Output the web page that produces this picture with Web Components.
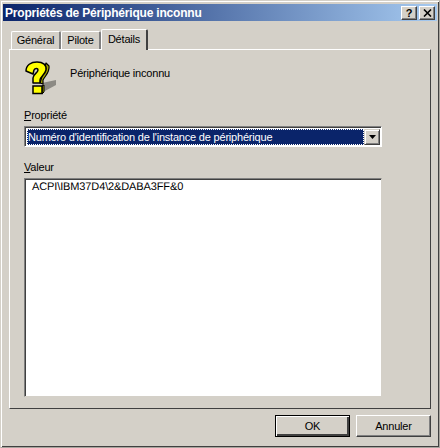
<!DOCTYPE html>
<html lang="fr">
<head>
<meta charset="utf-8">
<title>Propriétés de Périphérique inconnu</title>
<style>
    body {
        margin: 0;
        background: #d4d0c8;
        font: 11px "Liberation Sans", Arial, sans-serif;
        letter-spacing: -0.2px;
        color: #000;
    }
</style>
</head>
<body>

<template id="x-dialog-template">
    <style>
        *, *::before, *::after { box-sizing: border-box; }
        :host {
            display: flex;
            flex-flow: column;
            box-sizing: border-box;
            width: 440px;
            height: 448px;
            overflow: hidden;
            background: #d4d0c8;
            border-style: solid;
            border-width: 1px;
            border-color: #d4d0c8 #a8a59e #a8a59e #d4d0c8;
            box-shadow: inset 1px 1px 0 #fff, inset -1px -1px 0 #404040;
        }
        .inner {
            flex: 1;
            display: flex;
            flex-flow: column;
            padding: 3px 2px 0 2px;
        }
        .title {
            height: 17px;
            flex: none;
            display: flex;
            align-items: center;
            justify-content: space-between;
            padding: 0 2px 0 2px;
            background: linear-gradient(90deg, #0a246a, #a6caf0);
            color: #fff;
            font-weight: bold;
            font-size: 12px;
        }
        .caption { display: flex; gap: 2px; }
        .body { flex: 1; display: flex; flex-flow: column; padding: 8px 6px 0 6px; }
        .tabs { display: flex; align-items: flex-end; height: 20px; padding-left: 2px; position: relative; z-index: 1; }
        .page {
            height: 360px;
            border-style: solid;
            border-width: 1px;
            border-color: #fff #404040 #404040 #fff;
        }
        .footer { display: flex; justify-content: flex-end; gap: 6px; padding-top: 6px; }
    </style>
    <div class="inner">
        <div class="title">
            <slot name="title"></slot>
            <div class="caption"><slot name="caption"></slot></div>
        </div>
        <div class="body">
            <div class="tabs"><slot name="tabs"></slot></div>
            <div class="page"><slot></slot></div>
            <div class="footer"><slot name="footer"></slot></div>
        </div>
    </div>
</template>

<template id="x-caption-button-template">
    <style>
        :host {
            display: flex;
            align-items: center;
            justify-content: center;
            box-sizing: border-box;
            width: 16px;
            height: 14px;
            background: #d4d0c8;
            color: #000;
            font: bold 11px "Liberation Sans", Arial, sans-serif;
            border-style: solid;
            border-width: 1px;
            border-color: #fff #404040 #404040 #fff;
            box-shadow: inset -1px -1px 0 #808080;
        }
    </style>
    <slot></slot>
</template>

<template id="x-tab-template">
    <style>
        :host {
            display: flex;
            align-items: center;
            justify-content: center;
            box-sizing: border-box;
            height: 18px;
            background: #d4d0c8;
            border-style: solid;
            border-width: 1px 2px 0 1px;
            border-color: #fff #808080 #fff #fff;
            border-radius: 2px 2px 0 0;
            padding-bottom: 1px;
        }
        :host([selected]) {
            height: 21px;
            margin: 0 0 -1px 0;
            padding-bottom: 3px;
            border-right-color: #404040;
        }
    </style>
    <slot></slot>
</template>

<template id="x-field-label-template">
    <style>
        :host { display: block; height: 13px; line-height: 13px; }
        ::slotted(u) { text-decoration: underline; }
    </style>
    <slot></slot>
</template>

<template id="x-combo-template">
    <style>
        *, *::before, *::after { box-sizing: border-box; }
        :host {
            display: flex;
            box-sizing: border-box;
            width: 358px;
            height: 21px;
            background: #fff;
            border-style: solid;
            border-width: 1px;
            border-color: #808080 #fff #fff #808080;
            box-shadow: inset 1px 1px 0 #404040;
            padding: 2px 1px 1px 2px;
        }
        .value {
            flex: 1;
            display: flex;
            align-items: center;
            padding-left: 1px;
            background: #0a246a;
            color: #fff;
            outline: 1px dotted #fff;
            outline-offset: -1px;
            white-space: nowrap;
            overflow: hidden;
        }
        .arrow {
            width: 16px;
            flex: none;
            display: flex;
            align-items: center;
            justify-content: center;
            background: #d4d0c8;
            border-style: solid;
            border-width: 1px;
            border-color: #d4d0c8 #404040 #404040 #d4d0c8;
            box-shadow: inset 1px 1px 0 #fff, inset -1px -1px 0 #808080;
        }
    </style>
    <div class="value"><slot></slot></div>
    <div class="arrow">
        <svg width="7" height="4" viewBox="0 0 7 4"><path d="M0 0H7L3.5 4Z" fill="#000"/></svg>
    </div>
</template>

<template id="x-listbox-template">
    <style>
        :host {
            display: block;
            box-sizing: border-box;
            width: 358px;
            height: 219px;
            background: #fff;
            border-style: solid;
            border-width: 1px;
            border-color: #808080 #d4d0c8 #d4d0c8 #808080;
            box-shadow: inset 1px 1px 0 #404040;
            padding: 2px 7px;
            line-height: 13px;
            letter-spacing: -0.12px;
            word-spacing: 0;
            text-rendering: geometricPrecision;
        }
    </style>
    <slot></slot>
</template>

<template id="x-button-template">
    <style>
        :host {
            display: flex;
            align-items: center;
            justify-content: center;
            box-sizing: border-box;
            width: 75px;
            height: 22px;
            background: #d4d0c8;
            border-style: solid;
            border-width: 1px;
            border-color: #fff #404040 #404040 #fff;
            box-shadow: inset -1px -1px 0 #808080;
        }
        :host([default]) {
            border-color: #000;
            box-shadow: inset 1px 1px 0 #fff, inset -2px -2px 0 #404040;
        }
    </style>
    <slot></slot>
</template>

<template id="x-device-details-template">
    <style>
        :host {
            display: flex;
            flex-flow: column;
            padding: 10px 0 0 14px;
        }
        .head { display: flex; align-items: center; height: 35px; gap: 13px; padding-left: 1px; box-sizing: border-box; }
        .head svg { flex: none; }
        .head span { margin-bottom: 9px; }
        .prop { margin-top: 14px; }
        .prop x-combo { margin-top: 4px; }
        .val { margin-top: 14px; }
        .val x-listbox { margin-top: 4px; }
    </style>
    <div class="head">
        <svg width="32" height="35" viewBox="0 0 32 35">
            <path d="M17 23 L31 20 L31 25 L18 32 Z" fill="#8c8a84"/>
            <path d="M21 3 L24 6 C25 12 20 16 18 20 L18 24 L15 23 Z" fill="#a8a800" stroke="#000" stroke-width="1.2" stroke-linejoin="round"/>
            <path d="M17 26 L19 25 V32 L17 34 Z" fill="#a8a800" stroke="#000" stroke-width="1"/>
            <path d="M1 11 C1 5 6 2 12 2 C18 2 22 5 21 10 C20 15 15 17 15 20 V23 H8 V18 C8 14 13 13 13 10 C13 8 10 8 9 10 L8 14 Z" fill="#ffff00" stroke="#000" stroke-width="1.5" stroke-linejoin="round"/>
            <path d="M8 26 H17 V33.5 H8 Z" fill="#ffff00" stroke="#000" stroke-width="1.5"/>
        </svg>
        <span>Périphérique inconnu</span>
    </div>
    <div class="prop">
        <x-field-label><u>P</u>ropriété</x-field-label>
        <x-combo>Numéro d'identification de l'instance de périphérique</x-combo>
    </div>
    <div class="val">
        <x-field-label><u>V</u>aleur</x-field-label>
        <x-listbox>ACPI\IBM37D4\2&amp;DABA3FF&amp;0</x-listbox>
    </div>
</template>

<x-dialog>
    <span slot="title">Propriétés de Périphérique inconnu</span>
    <x-caption-button slot="caption">?</x-caption-button>
    <x-caption-button slot="caption">
        <svg width="9" height="8" viewBox="0 0 9 8"><path d="M1 0.5L8 7.5M8 0.5L1 7.5" stroke="#000" stroke-width="1.6" fill="none"/></svg>
    </x-caption-button>
    <x-tab slot="tabs" style="width:50px">Général</x-tab>
    <x-tab slot="tabs" style="width:40px">Pilote</x-tab>
    <x-tab slot="tabs" selected style="width:47px">Détails</x-tab>
    <x-device-details></x-device-details>
    <x-button slot="footer" default>OK</x-button>
    <x-button slot="footer">Annuler</x-button>
</x-dialog>

<script type="module">
    // every element only clones its own template, the markup does the rest
    const simple = (name) => customElements.define(
        name,
        class extends HTMLElement {
            constructor() {
                super();
                const template_clone = document.getElementById(`${name}-template`).content.cloneNode(true);
                this.attachShadow({ mode: "open" }).append(template_clone);
            }
        },
    );

    ["x-caption-button", "x-tab", "x-field-label", "x-combo", "x-listbox", "x-button", "x-device-details", "x-dialog"].forEach(simple);
</script>
</body>
</html>
